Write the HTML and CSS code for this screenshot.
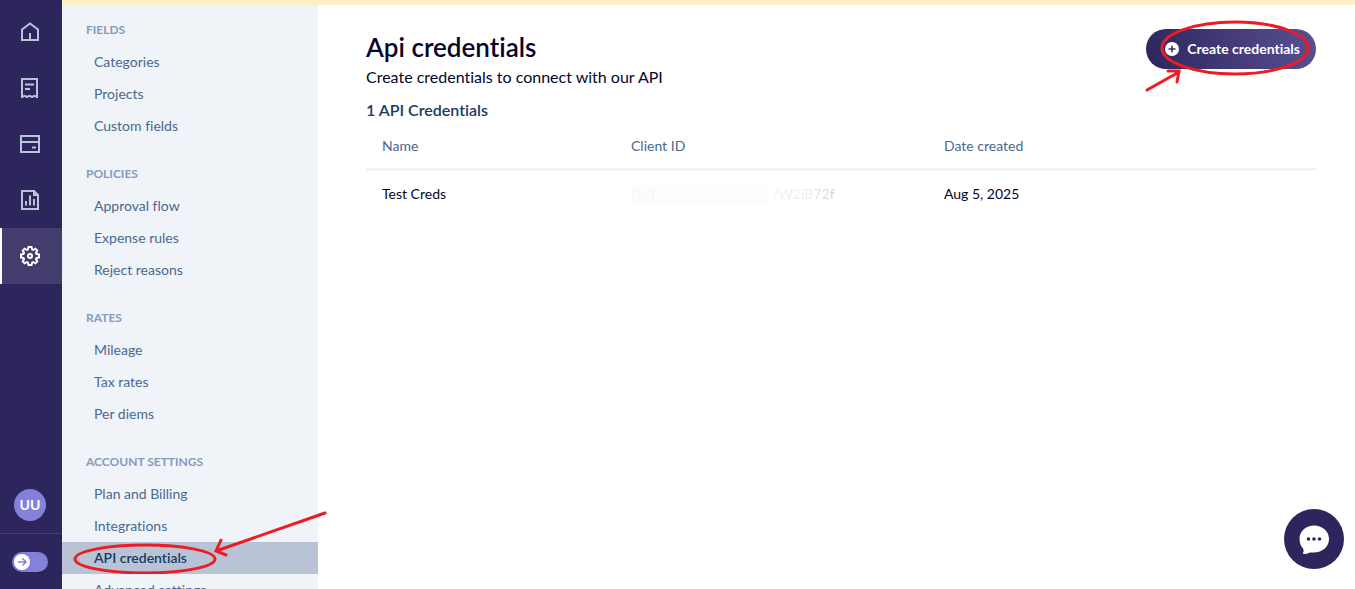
FILE: index.html
```html
<!DOCTYPE html>
<html lang="en">
<head>
<meta charset="utf-8">
<meta name="viewport" content="width=device-width, initial-scale=1">
<title>Api credentials</title>
<link rel="stylesheet" href="styles.css">
</head>
<body>
<div class="app">
  <nav class="rail" aria-label="Main">
    <a class="rail-link" href="#" aria-label="Home">
      <svg class="rail-icon" viewBox="0 0 20 20"><path d="M2 7.500 10 1.400 18 7.500V18H2ZM10 18V11"/></svg>
    </a>
    <a class="rail-link" href="#" aria-label="Expenses">
      <svg class="rail-icon" viewBox="0 0 20 20"><path d="M2 1H17V19L14.5 17.8 12 19 9.5 17.8 7 19 4.5 17.8 2 19ZM5 6.5H14M5 11H10"/></svg>
    </a>
    <a class="rail-link" href="#" aria-label="Cards">
      <svg class="rail-icon" viewBox="0 0 20 20"><path d="M1 2H19V18H1ZM1 8H19M12 13.5H16"/></svg>
    </a>
    <a class="rail-link" href="#" aria-label="Reports">
      <svg class="rail-icon" viewBox="0 0 20 20"><path d="M2 1H14L18 5V19H2ZM6 15.500V11M10 15.500V5.500M14 15.500V9"/><path class="solid" d="M13 1 18 6H13Z"/></svg>
    </a>
    <a class="rail-link current" href="#" aria-label="Settings" aria-current="page">
      <svg class="rail-icon" viewBox="0 0 20 20"><path d="M8.500 1H11.500L12.200 3.600 13.200 4 15.400 2.700 17.300 4.600 16 6.800 16.400 7.800 19 8.500V11.500L16.400 12.200 16 13.200 17.300 15.400 15.400 17.300 13.200 16 12.200 16.400 11.500 19H8.500L7.800 16.400 6.800 16 4.600 17.300 2.700 15.400 4 13.200 3.600 12.200 1 11.500V8.500L3.600 7.800 4 6.800 2.700 4.600 4.600 2.700 6.800 4 7.800 3.600Z"/><circle cx="10" cy="10" r="2"/></svg>
    </a>
    <button class="avatar" type="button">UU</button>
    <div class="rail-foot">
      <button class="expand" type="button" aria-label="Expand menu">
        <span class="knob"><svg viewBox="0 0 16 16"><path d="M4 8H12M8.500 4.500 12 8 8.500 11.500"/></svg></span>
      </button>
    </div>
  </nav>

  <div class="page">
    <div class="banner"></div>
    <div class="body">
      <nav class="sidebar" aria-label="Settings">
        <section class="group">
          <h2 class="group-title">FIELDS</h2>
          <a class="item" href="#">Categories</a>
          <a class="item" href="#">Projects</a>
          <a class="item" href="#">Custom fields</a>
        </section>
        <section class="group">
          <h2 class="group-title">POLICIES</h2>
          <a class="item" href="#">Approval flow</a>
          <a class="item" href="#">Expense rules</a>
          <a class="item" href="#">Reject reasons</a>
        </section>
        <section class="group">
          <h2 class="group-title">RATES</h2>
          <a class="item" href="#">Mileage</a>
          <a class="item" href="#">Tax rates</a>
          <a class="item" href="#">Per diems</a>
        </section>
        <section class="group">
          <h2 class="group-title">ACCOUNT SETTINGS</h2>
          <a class="item" href="#">Plan and Billing</a>
          <a class="item" href="#">Integrations</a>
          <a class="item selected" href="#" aria-current="page">API credentials
            <svg class="mark mark-item" viewBox="0 0 256 68"><ellipse cx="73" cy="53" rx="70" ry="14"/><path d="M253 7 144 45M149 34 144 45 154 49"/></svg>
          </a>
          <a class="item" href="#">Advanced settings</a>
        </section>
      </nav>

      <main class="main">
        <header class="head">
          <div class="head-text">
            <h1 class="title">Api credentials</h1>
            <p class="lead">Create credentials to connect with our API</p>
          </div>
          <div class="action">
            <button class="create" type="button">
              <svg class="plus" viewBox="0 0 14 14"><circle cx="7" cy="7" r="7"/><path d="M7 3.500V10.500M3.500 7H10.500"/></svg>
              Create credentials
            </button>
            <svg class="mark mark-create" viewBox="0 0 180 80"><ellipse cx="95" cy="33" rx="73" ry="26"/><path d="M7 75 39 57M28 56H39L37 67"/></svg>
          </div>
        </header>
        <h2 class="count">1 API Credentials</h2>
        <table class="table">
          <thead>
            <tr><th class="col-name" scope="col">Name</th><th class="col-client" scope="col">Client ID</th><th scope="col">Date created</th></tr>
          </thead>
          <tbody>
            <tr><td>Test Creds</td><td class="client"><span class="masked">DVI</span><span class="tail">VW2iB72f</span></td><td>Aug 5, 2025</td></tr>
          </tbody>
        </table>
      </main>
    </div>
  </div>

  <button class="chat" type="button" aria-label="Open chat">
    <svg viewBox="0 0 60 60"><path class="bubble" d="M30 16.500C38 16.500 45 22 45 30S38 43.500 30 43.500H26C23.500 45 21 45.300 18.500 44.500 20 43 19.800 41 19 39.500 16.700 37 15.500 33.500 15.500 30 15.500 22 22 16.500 30 16.500Z"/><circle cx="24.500" cy="30" r="1.800"/><circle cx="30" cy="30" r="1.800"/><circle cx="35.500" cy="30" r="1.800"/></svg>
  </button>
</div>
</body>
</html>
```
FILE: styles.css
```css
* {
  box-sizing: border-box;
}

body {
  margin: 0;
  background: #fff;
  color: #05052b;
  font-family: Lato, "Open Sans", sans-serif;
  font-size: 14px;
  font-variant-ligatures: none;
  line-height: 20px;
}

h1, h2, p {
  margin: 0;
}

a {
  color: inherit;
  text-decoration: none;
}

button {
  padding: 0;
  border: 0;
  font: inherit;
  font-variant-ligatures: none;
  cursor: pointer;
}

.app {
  display: flex;
  height: 100vh;
  overflow: hidden;
}

/* Icon rail */
.rail {
  display: flex;
  flex: none;
  flex-direction: column;
  width: 62px;
  padding-top: 4px;
  background: #2d265d;
}

.rail-link {
  display: flex;
  align-items: center;
  height: 56px;
  padding-left: 20px;
  color: #b8c4d8;
}

.rail-link.current {
  padding-left: 18px;
  border-left: 2px solid #fff;
  background: #433d6d;
  color: #fff;
}

.rail-icon {
  width: 20px;
  height: 20px;
  fill: none;
  stroke: currentColor;
  stroke-width: 2;
}

.rail-icon .solid {
  fill: currentColor;
  stroke: none;
}

.avatar {
  width: 32px;
  height: 32px;
  margin: auto 0 12px 14px;
  border-radius: 50%;
  background: #8481dc;
  color: #fff;
  font-weight: 700;
}

.rail-foot {
  display: flex;
  align-items: center;
  height: 56px;
  padding-left: 12px;
  border-top: 1px solid #433d6d;
}

.expand {
  display: flex;
  align-items: center;
  width: 36px;
  height: 20px;
  padding: 2px;
  border-radius: 10px;
  background: #8481dc;
}

.knob {
  width: 16px;
  height: 16px;
  border-radius: 50%;
  background: #fff;
}

.knob svg {
  display: block;
  fill: none;
  stroke: #8481dc;
  stroke-width: 1.5;
}

/* Page frame */
.page {
  display: flex;
  flex: 1;
  flex-direction: column;
  min-width: 0;
}

.banner {
  flex: none;
  height: 5px;
  background: #ffefc6;
}

.body {
  display: flex;
  flex: 1;
  min-height: 0;
}

/* Settings menu */
.sidebar {
  display: flex;
  flex: none;
  flex-direction: column;
  gap: 16px;
  width: 256px;
  padding-top: 9px;
  background: #f0f4f9;
}

.group-title {
  padding-left: 24px;
  color: #839bbd;
  font-size: 12px;
  font-weight: 700;
  line-height: 32px;
}

.item {
  display: block;
  padding-left: 32px;
  color: #4b688e;
  line-height: 32px;
}

.item.selected {
  position: relative;
  background: #b8c4d6;
  color: #1b3a60;
  font-weight: 600;
}

/* Red pen marks over the page */
.mark {
  position: absolute;
  z-index: 2;
  fill: none;
  stroke: #ed1c24;
  stroke-width: 3;
  stroke-linecap: round;
  pointer-events: none;
}

.mark-item {
  top: -36px;
  left: 10px;
  width: 256px;
  height: 68px;
}

.mark-create {
  top: -14px;
  left: -6px;
  width: 180px;
  height: 80px;
}

/* Content */
.main {
  flex: 1;
  min-width: 0;
  padding: 24px 39px 24px 48px;
}

.head {
  display: flex;
  justify-content: space-between;
}

.title {
  font-size: 26px;
  font-weight: 600;
  line-height: 36px;
}

.lead {
  font-size: 16px;
  line-height: 24px;
}

.action {
  position: relative;
}

.create {
  display: flex;
  align-items: center;
  justify-content: flex-end;
  gap: 8px;
  width: 170px;
  height: 40px;
  padding-right: 16px;
  border-radius: 20px;
  background: linear-gradient(75deg, #2d265d, #585092);
  color: #fff;
  font-weight: 700;
  white-space: nowrap;
}

.plus {
  width: 14px;
  height: 14px;
  fill: #fff;
  stroke: none;
}

.plus path {
  stroke: #37306a;
  stroke-width: 1.5;
}

.count {
  padding-top: 9px;
  color: #1b3a60;
  font-size: 16px;
  font-weight: 600;
  line-height: 24px;
}

.table {
  width: 100%;
  border-collapse: collapse;
  table-layout: fixed;
}

.table th {
  height: 47px;
  padding: 2px 16px 0;
  border-bottom: 3px solid #f0f4f9;
  color: #4b688e;
  font-weight: 400;
  text-align: left;
}

.table td {
  height: 48px;
  padding: 0 16px;
}

.col-name {
  width: 249px;
}

.col-client {
  width: 313px;
}

.client {
  white-space: nowrap;
}

.masked {
  display: inline-block;
  width: 138px;
  background: #fdfdfd;
  color: #f7f7f8;
}

.tail {
  background: linear-gradient(90deg, #fdfdfd 4px, #f0eeee 8px, #efedee 40px, #cfccd2);
  background-clip: text;
  color: transparent;
}

.chat {
  position: fixed;
  right: 11px;
  bottom: 20px;
  width: 60px;
  height: 60px;
  border-radius: 50%;
  background: #2d265d;
}

.chat svg {
  display: block;
  fill: #2d265d;
}

.chat .bubble {
  fill: #fff;
}
```
